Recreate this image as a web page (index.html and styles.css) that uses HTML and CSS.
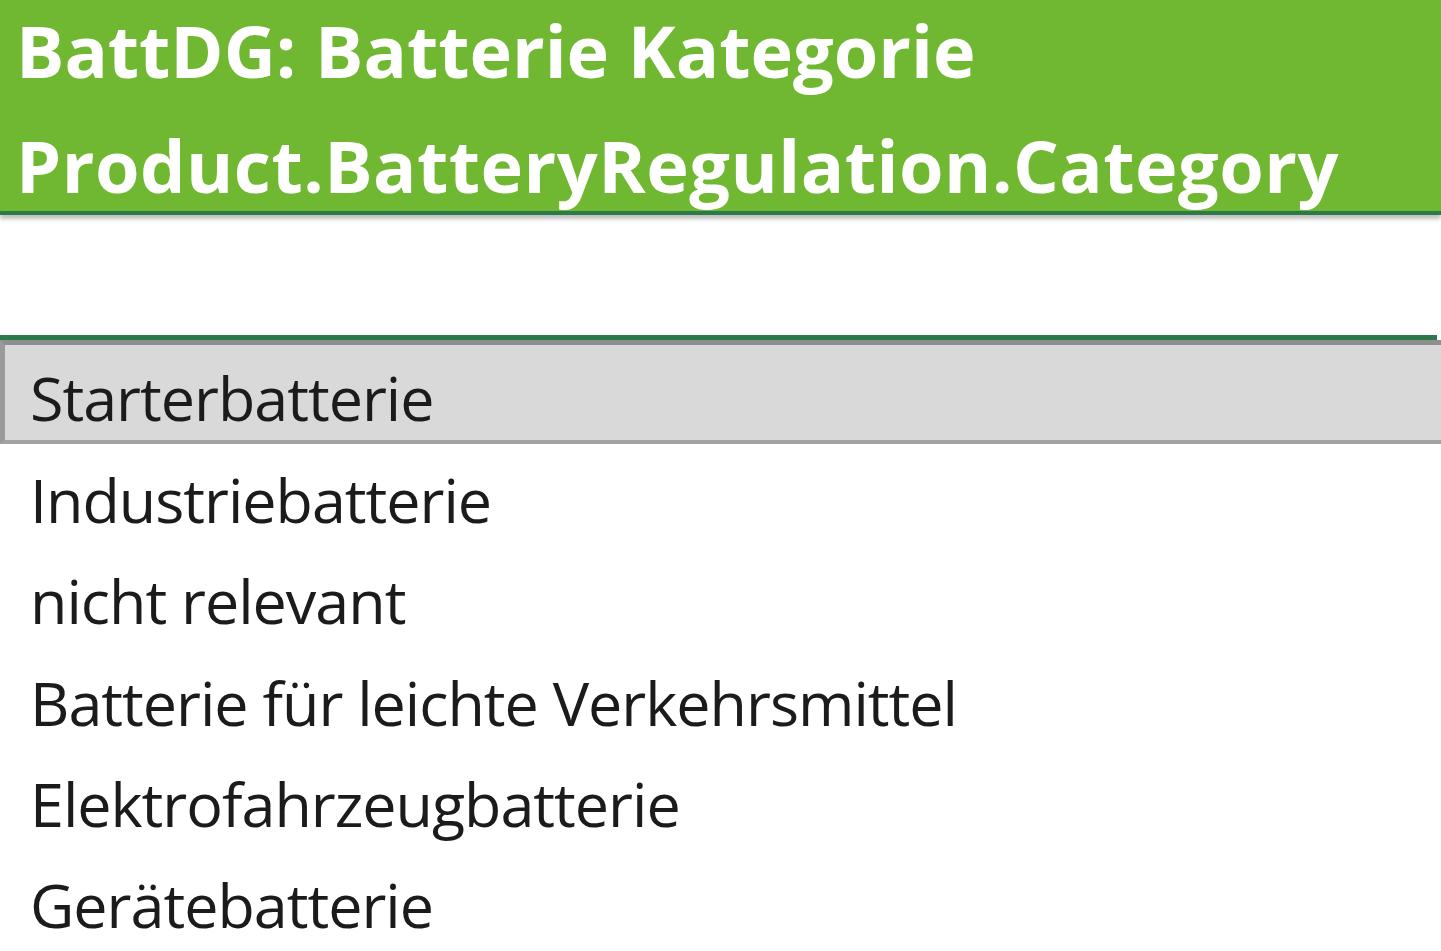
FILE: index.html
```html
<!DOCTYPE html>
<html lang="de">
<head>
    <meta charset="UTF-8">
    <title>BattDG: Batterie Kategorie</title>
    <link rel="stylesheet" href="styles.css">
</head>
<body>

<div class="header">
    <div class="header-text">
        <div class="header-line">BattDG: Batterie Kategorie</div>
        <div class="header-line">Product.BatteryRegulation.Category</div>
    </div>
</div>

<div class="cell"></div>

<div class="dropdown">
    <div class="option selected">Starterbatterie</div>
    <div class="option-list">
        <div class="option">Industriebatterie</div>
        <div class="option">nicht relevant</div>
        <div class="option">Batterie für leichte Verkehrsmittel</div>
        <div class="option">Elektrofahrzeugbatterie</div>
        <div class="option">Gerätebatterie</div>
    </div>
</div>

</body>
</html>
```

FILE: styles.css
```css
body {
    margin: 0;
    padding: 0;
    background-color: #fff;
    font-family: "Open Sans", "Noto Sans", sans-serif;
    overflow: hidden;
}
.header {
    display: flow-root;
    height: 211px;
    background-color: #70b832;
    border-bottom: 4px solid #2c7a4a;
    box-shadow: 0 4px 4px rgba(0, 0, 0, 0.25);
    padding-left: 16px;
}
.header-text {
    margin-top: -7px;
}
.header-line {
    color: #fff;
    font-weight: bold;
    font-size: 72px;
    line-height: 115px;
    white-space: nowrap;
}
.header-line:last-child {
    letter-spacing: 0.5px;
}
.cell {
    height: 120px;
}
.dropdown {
    border-top: 5px solid #2c7a4a;
    margin-right: 4px;
}
.option {
    height: 101.25px;
    line-height: 101.25px;
    padding-left: 30px;
    font-size: 61px;
    letter-spacing: -1px;
    color: #1b1b1b;
    white-space: nowrap;
}
.option.selected {
    height: 90px;
    line-height: 95px;
    padding-top: 5px;
    padding-left: 25px;
    margin-right: -4px;
    background-color: #d9d9d9;
    border-top: 5px solid #8e8e8e;
    border-left: 5px solid #9a9a9a;
    border-bottom: 4px solid #a3a3a3;
}
.option-list {
    padding-top: 5px;
}
```
